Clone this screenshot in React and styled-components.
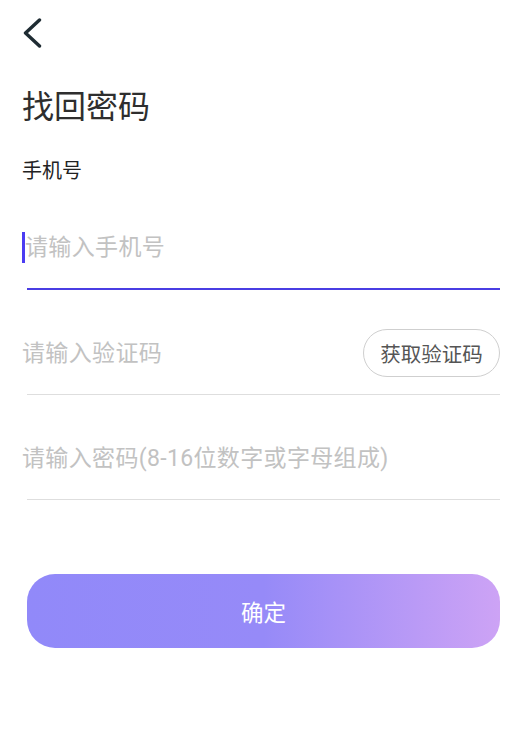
import styled, { createGlobalStyle } from 'styled-components';

const GlobalStyle = createGlobalStyle`
  html, body {
    margin: 0;
    padding: 0;
    background: #ffffff;
    font-family: Roboto, "Noto Sans CJK SC", "Noto Sans", sans-serif;
  }
  * { box-sizing: border-box; }
`;

const Page = styled.div`
  width: 531px;
  min-height: 741px;
  padding: 0 31px 0 22px;
  background: #fff;
`;

const Header = styled.div`
  height: 66px;
  display: flex;
  align-items: center;
`;

const BackButton = styled.button`
  border: none;
  background: none;
  padding: 0;
  width: 22px;
  height: 30px;
  display: flex;
  align-items: center;
  cursor: pointer;
`;

const Titulo = styled.h1`
  margin: 21px 0 0;
  font-size: 32px;
  line-height: 40px;
  font-weight: 400;
  color: #2e2e2e;
`;

const Label = styled.div`
  margin-top: 32px;
  font-size: 20px;
  line-height: 24px;
  color: #222;
`;

const Formulario = styled.form`
  margin-top: 25px;
  display: flex;
  flex-direction: column;
  gap: 24px;
`;

const Field = styled.div`
  display: flex;
  flex-direction: column;
`;

const FieldRow = styled.div`
  height: 80px;
  padding-bottom: 1px;
  display: flex;
  align-items: center;
`;

const Caret = styled.span`
  width: 3px;
  height: 31px;
  background: #4b3cf2;
  flex: none;
`;

const Input = styled.input`
  flex: 1;
  min-width: 0;
  border: none;
  outline: none;
  background: transparent;
  padding: 0;
  font-family: inherit;
  font-size: 23px;
  letter-spacing: 0.35px;
  color: #333;
  caret-color: transparent;

  &::placeholder {
    color: #c2c2c2;
  }
`;

const Underline = styled.div`
  margin-left: 5px;
  height: ${(p) => (p.$active ? '1.5px' : '1px')};
  background: ${(p) => (p.$active ? '#4a3de3' : '#dedede')};
`;

const CodeButton = styled.button`
  flex: none;
  width: 137px;
  height: 48px;
  border: 1px solid #cfcfcf;
  border-radius: 24px;
  background: #fff;
  font-family: inherit;
  font-size: 20.5px;
  color: #555;
  padding: 0;
  cursor: pointer;
`;

const Botao = styled.button`
  margin: 74px 0 0 5px;
  width: calc(100% - 5px);
  height: 74px;
  border: none;
  border-radius: 28px;
  background: linear-gradient(90deg, #9189f9 0%, #968af8 50%, #cda3f5 100%);
  color: #fff;
  font-family: inherit;
  font-size: 22.5px;
  cursor: pointer;
`;

const ChevronLeft = () => (
  <svg width="22" height="30" viewBox="0 0 22 30" fill="none">
    <path
      d="M17.5 2 L3.5 15 L17.5 28"
      stroke="#1f2c33"
      strokeWidth="3.4"
      strokeLinecap="round"
      strokeLinejoin="round"
    />
  </svg>
);

export default function App() {
  return (
    <>
      <GlobalStyle />
      <Page>
        <Header>
          <BackButton type="button" aria-label="返回">
            <ChevronLeft />
          </BackButton>
        </Header>

        <Titulo>找回密码</Titulo>
        <Label>手机号</Label>

        <Formulario onSubmit={(e) => e.preventDefault()}>
          <Field>
            <FieldRow>
              <Caret />
              <Input type="tel" placeholder="请输入手机号" />
            </FieldRow>
            <Underline $active />
          </Field>

          <Field>
            <FieldRow>
              <Input type="text" placeholder="请输入验证码" />
              <CodeButton type="button">获取验证码</CodeButton>
            </FieldRow>
            <Underline />
          </Field>

          <Field>
            <FieldRow>
              <Input type="password" placeholder="请输入密码(8-16位数字或字母组成)" />
            </FieldRow>
            <Underline />
          </Field>
        </Formulario>

        <Botao type="submit">确定</Botao>
      </Page>
    </>
  );
}
